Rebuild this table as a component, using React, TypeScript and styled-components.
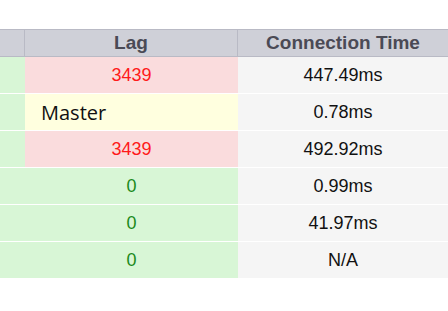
import styled, { createGlobalStyle } from 'styled-components';

const GlobalStyle = createGlobalStyle`
  body {
    margin: 0;
    background: #fff;
    font-family: "Liberation Sans", Arial, sans-serif;
  }
`

const Wrapper = styled.main`
  width: 448px;
  padding-top: 29px;
  overflow: hidden;
`

const columns = '25px 213px 1fr';

const HeaderRow = styled.div`
  display: grid;
  grid-template-columns: ${columns};
  height: 28px;
  box-sizing: border-box;
  border-top: 1px solid #b9bac5;
  border-bottom: 1px solid #b9bac5;
  background: #cfd0d8;
`

const HeaderCell = styled.div<{ $divider?: boolean }>`
  box-sizing: border-box;
  border-right: ${p => (p.$divider ? '1px solid #b9bac5' : 'none')};
  font-size: 19px;
  font-weight: 700;
  line-height: 26px;
  text-align: center;
  color: #4a4a55;
  white-space: nowrap;
`

const Row = styled.div`
  display: grid;
  grid-template-columns: ${columns};
  height: 37px;
  box-sizing: border-box;
  border-bottom: 1px solid #fff;
`

const tones = {
  good: { bg: '#d8f6d6', fg: '#1b8a1b' },
  bad: { bg: '#fadcdd', fg: '#ff1a1a' },
  master: { bg: '#ffffdf', fg: '#111' },
  plain: { bg: '#f5f5f5', fg: '#111' },
}

type Tone = keyof typeof tones

const Cell = styled.div<{ $tone: Tone }>`
  display: flex;
  align-items: center;
  justify-content: center;
  background: ${p => tones[p.$tone].bg};
  color: ${p => tones[p.$tone].fg};
  font-size: 18px;
  white-space: nowrap;
`

const MasterLabel = styled.span`
  flex: 1;
  padding-left: 16px;
  font-family: "Open Sans", "Noto Sans", sans-serif;
  font-size: 20px;
  color: #111;
`

const rows: { lag: string; tone: Tone; time: string }[] = [
  { lag: '3439', tone: 'bad', time: '447.49ms' },
  { lag: 'Master', tone: 'master', time: '0.78ms' },
  { lag: '3439', tone: 'bad', time: '492.92ms' },
  { lag: '0', tone: 'good', time: '0.99ms' },
  { lag: '0', tone: 'good', time: '41.97ms' },
  { lag: '0', tone: 'good', time: 'N/A' },
]

const App = () => {
  return (
    <Wrapper>
      <GlobalStyle />
      <HeaderRow>
        <HeaderCell $divider />
        <HeaderCell $divider>Lag</HeaderCell>
        <HeaderCell>Connection Time</HeaderCell>
      </HeaderRow>

      {rows.map((row, i) => (
        <Row key={i}>
          <Cell $tone="good" />
          <Cell $tone={row.tone}>
            {row.tone === 'master'
              ? <MasterLabel>{row.lag}</MasterLabel>
              : row.lag}
          </Cell>
          <Cell $tone="plain">{row.time}</Cell>
        </Row>
      ))}
    </Wrapper>
  )
}

export default App
